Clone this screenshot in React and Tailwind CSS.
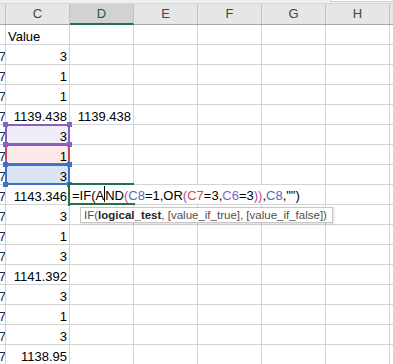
import React from "react";

const cols = ["C", "D", "E", "F", "G", "H"];

const cValues = [
  "Value", "3", "1", "1", "1139.438", "3", "1", "3", "1143.346",
  "3", "1", "3", "1141.392", "3", "1", "3", "1138.95",
];

const ranges = {
  6: { line: "border-[#8a5fc4]", dot: "bg-[#8a5fc4]", fill: "bg-[#f0ecf8]", z: "z-[3]" },
  7: { line: "border-[#cf4b4b]", dot: "bg-[#cf4b4b]", fill: "bg-[#fbeae9]", z: "z-[2]" },
  8: { line: "border-[#3d72c8]", dot: "bg-[#3d72c8]", fill: "bg-[#dbe4f4]", z: "z-[3]" },
};

function RangeBox({ r }) {
  return (
    <div className={`absolute -left-px -top-px -right-px -bottom-px border-2 ${r.line} ${r.z} pointer-events-none`}>
      <div className={`absolute -left-[4px] -top-[4px] w-[5px] h-[5px] ${r.dot}`} />
      <div className={`absolute -right-[4px] -top-[4px] w-[5px] h-[5px] ${r.dot}`} />
      <div className={`absolute -left-[4px] -bottom-[4px] w-[5px] h-[5px] ${r.dot}`} />
      <div className={`absolute -right-[4px] -bottom-[4px] w-[5px] h-[5px] ${r.dot}`} />
    </div>
  );
}

function Formula() {
  return (
    <>
      {/* green active cell edges */}
      <div className="absolute -left-[2px] -top-[2px] w-[66px] h-[2px] bg-[#217346] z-20" />
      <div className="absolute -left-[2px] -top-[2px] w-[2px] h-[23px] bg-[#217346] z-20" />
      <div className="absolute -left-[2px] -bottom-[1px] w-[67px] h-[2px] bg-[#217346] z-20" />
      <div className="absolute left-0 top-0 w-[255px] h-[18px] bg-white z-10 flex items-end pl-[2px] text-[13px] leading-[15px] text-black whitespace-nowrap">
        <span>=IF(A</span>
        <span className="inline-block w-0 h-[16px] border-l border-black self-center" />
        <span>ND</span>
        <span className="text-[#d8456f]">(</span>
        <span className="text-[#3d72c8]">C8</span>
        <span>=1,OR</span>
        <span className="text-[#a74bb3]">(</span>
        <span className="text-[#cf4b4b]">C7</span>
        <span>=3,</span>
        <span className="text-[#8a5fc4]">C6</span>
        <span>=3</span>
        <span className="text-[#a74bb3]">)</span>
        <span className="text-[#d8456f]">)</span>
        <span>,</span>
        <span className="text-[#3d72c8]">C8</span>
        <span>,"")</span>
      </div>
      {/* argument tooltip */}
      <div className="absolute left-[10px] top-[22px] w-[253px] h-[16px] z-30 bg-white border border-[#c6c6c6] shadow-[1px_1px_2px_rgba(0,0,0,0.15)] flex items-center pl-[3px] text-[11.5px] leading-[14px] text-[#505050] whitespace-nowrap">
        <span>IF(</span>
        <span className="font-bold text-[#262626]">logical_test</span>
        <span>, [value_if_true], [value_if_false])</span>
      </div>
    </>
  );
}

export default function App() {
  return (
    <div className="w-[393px] h-[364px] overflow-hidden bg-white font-['Liberation_Sans',Arial,sans-serif]">
      <div className="h-[4px] flex bg-[#f0f0f0] border-b border-[#d6d6d6]">
        <div className="flex-1" />
        <div className="w-[63px] h-[2px] bg-white border-l border-b border-[#d0d0d0]" />
      </div>

      <div className="h-[21px] flex bg-[#e6e6e6] border-b border-[#a6a6a6] text-[13px] text-[#444]">
        <div className="w-[6px] shrink-0 border-r border-[#c4c4c4]" />
        {cols.map((c) => (
          <div
            key={c}
            className={
              c === "D"
                ? "w-[64px] shrink-0 flex items-center justify-center bg-[#d2d2d2] border-r border-[#c4c4c4] border-b-2 border-b-[#217346] -mb-px text-[#1f5c38]"
                : "w-[64px] shrink-0 flex items-center justify-center border-r border-[#c4c4c4]"
            }
          >
            {c}
          </div>
        ))}
        <div className="flex-1" />
      </div>

      {cValues.map((v, i) => {
        const row = i + 1;
        const range = ranges[row];
        const isValue = row === 1;
        return (
          <div key={row} className="h-[20px] flex text-[13px] leading-[15px] text-black">
            <div className="w-[6px] shrink-0 border-r border-b border-[#d4d4d4] overflow-hidden flex items-end justify-end">
              {!isValue && <span className="text-[#1b2a4a] -mr-[1px]">7</span>}
            </div>
            <div
              className={`relative w-[64px] shrink-0 border-r border-b border-[#d4d4d4] flex items-end whitespace-nowrap ${
                isValue ? "justify-start pl-[2px]" : "justify-end pr-[2px]"
              } ${range ? range.fill : ""}`}
            >
              <span className="relative z-[4]">{v}</span>
              {range && <RangeBox r={range} />}
            </div>
            <div className="relative w-[64px] shrink-0 border-r border-b border-[#d4d4d4] flex items-end justify-end pr-[2px]">
              {row === 5 && <span>1139.438</span>}
              {row === 9 && <Formula />}
            </div>
            <div className="w-[64px] shrink-0 border-r border-b border-[#d4d4d4]" />
            <div className="w-[64px] shrink-0 border-r border-b border-[#d4d4d4]" />
            <div className="w-[64px] shrink-0 border-r border-b border-[#d4d4d4]" />
            <div className="w-[64px] shrink-0 border-r border-b border-[#d4d4d4]" />
            <div className="flex-1 border-b border-[#d4d4d4]" />
          </div>
        );
      })}
    </div>
  );
}
